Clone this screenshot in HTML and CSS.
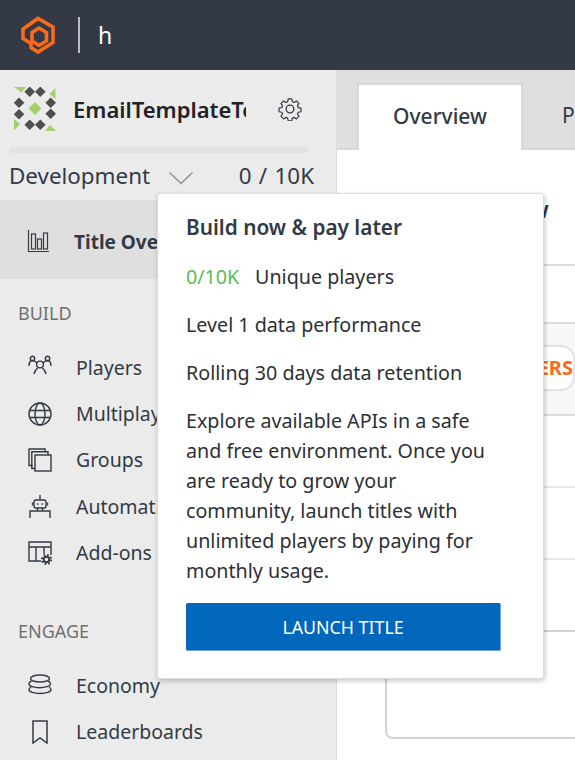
FILE: index.html
```html
<!DOCTYPE html>
<html lang="en">
<head>
<meta charset="utf-8">
<title>Overview</title>
<link rel="stylesheet" href="styles.css">
</head>
<body>
<header class="topbar">
  <svg class="logo" viewBox="20 14 36 40" width="36" height="40" fill="none" stroke="#f96b1b" stroke-width="3.600"><path d="M23 28 L38 17.500 L53 26 V41.500 L38 51 L31 46.500 V40"/><path d="M23 27 V37.500 L31 42.500"/><path d="M39 27 L46.500 31.500 V40 L39 44.500 L32 40 V31.500 Z"/></svg>
  <span class="divider"></span>
  <span class="crumb">h</span>
</header>
<div class="shell">
  <aside class="sidebar">
    <div class="title-row">
      <svg class="title-logo" viewBox="14 87 42 44" width="42" height="44">
        <path d="M14 87H26L21.500 92.500Z M55.500 88V99L49.500 94Z M56 131H45L50 125Z M14 119V130.500L20 124Z" fill="#a4d06a"/>
        <path d="M29.700 86.500l5.300 5.300-5.300 5.300-5.300-5.300Z M40.300 86.500l5.300 5.300-5.300 5.300-5.300-5.300Z M19 97.400l5.300 5.300-5.300 5.300-5.300-5.300Z M19 109l5.300 5.300-5.300 5.300-5.300-5.300Z M50.700 97.400l5.300 5.300-5.300 5.300-5.300-5.300Z M50.700 108.400l5.300 5.300-5.300 5.300-5.300-5.300Z M29.700 119.400l5.300 5.300-5.300 5.300-5.300-5.300Z M40.300 119.400l5.300 5.300-5.300 5.300-5.300-5.300Z" fill="#4f4f4f"/>
        <path d="M35 102l6.500 6.500-6.500 6.500-6.500-6.500Z" fill="#a4d06a"/>
      </svg>
      <div class="title-name">EmailTemplateTest</div>
      <svg class="gear" viewBox="0 0 24 24" width="24" height="24" fill="none" stroke="#333a45" stroke-width="1.300" stroke-linejoin="round"><circle cx="12" cy="12" r="3.800"/><path d="M10 .8h4l.6 3.100 1.900.8 2.700-1.700 2.800 2.800-1.700 2.700.8 1.900 3.100.6v4l-3.100.6-.8 1.900 1.700 2.700-2.800 2.800-2.700-1.700-1.900.8-.6 3.100h-4l-.6-3.100-1.900-.8-2.700 1.700-2.800-2.800 1.700-2.700-.8-1.900-3.100-.6v-4l3.100-.6.800-1.900-1.700-2.700 2.800-2.800 2.700 1.700 1.900-.8Z" transform="translate(1.200 1.200) scale(.9)"/></svg>
    </div>
    <div class="usage-bar"></div>
    <div class="env-row">
      <span class="env-name">Development</span>
      <svg class="chevron" viewBox="0 0 26 14" width="26" height="14"><path d="M1.500 1.500 L13 12.500 L24.500 1.500" fill="none" stroke="#8f9499" stroke-width="1.500"/></svg>
      <span class="env-count">0 / 10K</span>
    </div>
    <a class="overview-item">
      <svg class="nav-icon" viewBox="0 0 24 24" width="24" height="24" fill="none" stroke="#333a45" stroke-width="1.200"><path d="M1.500 0v21.500H22"/><rect x="4.500" y="4" width="4" height="15"/><rect x="10.500" y="9" width="4" height="10"/><rect x="16.500" y="3" width="4" height="16"/></svg>
      <span>Title Overview</span>
    </a>
    <div class="nav-heading">BUILD</div>
    <nav class="nav-group">
      <a class="nav-item"><svg class="nav-icon" viewBox="0 0 24 24" width="24" height="24" fill="none" stroke="#333a45" stroke-width="1.400"><circle cx="12" cy="9.500" r="3.400"/><path d="M6 19c.5-2.500 2-4.500 3.500-6M18 19c-.5-2.500-2-4.500-3.500-6"/><circle cx="4.500" cy="3.500" r="2.200"/><circle cx="19.500" cy="3.500" r="2.200"/><path d="M1 11c0-3 1-5.500 3.500-5.500 1.800 0 3 1 4.500 2.500M23 11c0-3-1-5.500-3.500-5.500-1.800 0-3 1-4.500 2.500"/></svg><span>Players</span></a>
      <a class="nav-item"><svg class="nav-icon" viewBox="0 0 24 24" width="24" height="24" fill="none" stroke="#333a45" stroke-width="1.400"><circle cx="12" cy="12" r="11"/><ellipse cx="12" cy="12" rx="5" ry="11"/><path d="M1.500 8.500h21M1.500 15.500h21"/></svg><span>Multiplayer</span></a>
      <a class="nav-item"><svg class="nav-icon" viewBox="0 0 24 24" width="24" height="24" fill="none" stroke="#333a45" stroke-width="1.400"><path d="M4.500 17.500H1V1H17V3.500"/><path d="M7 20.500H3.800V3.800H20V7"/><rect x="7" y="7" width="16" height="16" fill="#ebebeb"/></svg><span>Groups</span></a>
      <a class="nav-item"><svg class="nav-icon" viewBox="0 0 24 24" width="24" height="24" fill="none" stroke="#333a45" stroke-width="1.400"><path d="M12 1v5"/><rect x="6" y="6" width="12" height="8" rx="2"/><path d="M4.500 8.500v3M19.500 8.500v3M9 10h1.500M13.500 10h1.500M9.500 14v3M14.500 14v3M2 24v-7h20v7"/></svg><span>Automation</span></a>
      <a class="nav-item"><svg class="nav-icon" viewBox="0 0 24 24" width="24" height="24" fill="none" stroke="#333a45" stroke-width="1.400"><path d="M13 20H1V1h22v13M1 6h22M8 6v14M16 6v7"/><circle cx="18.500" cy="18.500" r="2.800" stroke-width="2"/><circle cx="18.500" cy="18.500" r="4.700" stroke-width="1.800" stroke-dasharray="1.800 1.900"/></svg><span>Add-ons</span></a>
    </nav>
    <div class="nav-heading engage">ENGAGE</div>
    <nav class="nav-group">
      <a class="nav-item"><svg class="nav-icon" viewBox="0 0 24 24" width="24" height="24" fill="none" stroke="#333a45" stroke-width="1.400"><ellipse cx="12" cy="5.500" rx="9.500" ry="3.500"/><path d="M3.500 8c-1.500.7-2.500 1.800-2.500 3 0 2.200 4.800 3.700 10.500 3.700S22.500 13 22.500 11c0-1.200-1-2.300-2.500-3"/><path d="M3 14c-1.300.8-2 1.700-2 2.700 0 2.200 5 3.800 11 3.800s11-1.600 11-3.800c0-1-.7-1.900-2-2.700"/></svg><span>Economy</span></a>
      <a class="nav-item"><svg class="nav-icon" viewBox="0 0 24 24" width="24" height="24" fill="none" stroke="#333a45" stroke-width="1.500"><path d="M5 1h14v22l-7-5-7 5Z"/></svg><span>Leaderboards</span></a>
    </nav>
  </aside>
  <main class="main">
    <div class="tabs">
      <div class="tab active">Overview</div>
      <div class="tab">Players</div>
    </div>
    <div class="content">
      <h2 class="content-title">Title Overview</h2>
      <div class="card">
        <div class="card-band">
          <div class="pill">VIEW PLAYERS</div>
        </div>
        <div class="card-row"></div>
        <div class="card-row"></div>
      </div>
      <div class="lower-card"></div>
    </div>
  </main>
</div>
<div class="popover">
  <div class="pop-title">Build now &amp; pay later</div>
  <div class="pop-line"><span class="pop-count">0/10K</span><span>Unique players</span></div>
  <div class="pop-line">Level 1 data performance</div>
  <div class="pop-line">Rolling 30 days data retention</div>
  <p class="pop-text">Explore available APIs in a safe and free environment. Once you are ready to grow your community, launch titles with unlimited players by paying for monthly usage.</p>
  <button class="pop-button">LAUNCH TITLE</button>
</div>
</body>
</html>
```
FILE: styles.css
```css
* { box-sizing: border-box; }
html, body { margin: 0; height: 100%; overflow: hidden; }
body { width: 575px; height: 760px; font-family: "Noto Sans", "Open Sans", sans-serif; color: #333a45; background: #fff; position: relative; }

.topbar { height: 70px; background: #333a45; display: flex; align-items: center; padding-left: 20px; }
.logo { flex: none; }
.divider { width: 2px; height: 36px; background: #b9bcc0; margin-left: 22px; }
.crumb { color: #fff; font-size: 23px; margin-left: 18px; }

.shell { display: flex; height: 690px; }
.sidebar { width: 337px; flex: none; background: #ebebeb; border-right: 1px solid #dcdcdc; overflow: hidden; }
.title-row { display: flex; align-items: center; padding-left: 14px; height: 77px; }
.title-logo { flex: none; }
.title-name { font-size: 22px; font-weight: 600; color: #1f2329; width: 173px; margin-left: 17px; white-space: nowrap; overflow: hidden; }
.gear { margin-left: 32px; flex: none; }
.usage-bar { height: 6px; width: 300px; margin: 0 0 0 9px; background: #e2e2e2; border-radius: 3px; }
.env-row { display: flex; align-items: center; height: 46px; padding: 0 22px 2px 9px; font-size: 22.400px; }
.chevron { margin-left: 18px; margin-top: 6px; flex: none; }
.env-count { margin-left: auto; white-space: nowrap; word-spacing: 1.500px; }

.overview-item { height: 79px; background: #dfdfdf; display: flex; align-items: center; padding: 4px 0 0 27px; font-size: 19px; font-weight: 700; white-space: nowrap; margin-top: 1px; }
.overview-item span { margin-left: 23px; }
.nav-heading { color: #707070; font-size: 18px; padding-left: 18px; margin-top: 23px; height: 22px; line-height: 22px; }
.engage { margin-top: 44px; }
.nav-group { margin-top: 20px; display: flex; flex-direction: column; }
.nav-item { height: 46.400px; display: flex; align-items: center; padding-left: 28px; font-size: 19.500px; white-space: nowrap; }
.nav-icon { flex: none; width: 24px; height: 24px; }
.nav-item span { margin-left: 24px; }

.main { flex: 1; min-width: 0; }
.tabs { height: 80px; background: #dfdfdf; box-shadow: inset 0 -2px #d9d9d9; display: flex; padding: 13px 0 0 20px; overflow: hidden; }
.tab { font-size: 21px; flex: none; line-height: 64px; white-space: nowrap; }
.tab.active { width: 166px; text-align: center; background: #fff; border: 2px solid #d9d9d9; border-bottom: 0; font-weight: 500; line-height: 62px; margin-right: 39px; height: 67px; }
.content { padding: 45px 0 0 48px; position: relative; }
.content-title { font-size: 23.500px; font-weight: 600; margin: 0; height: 69px; color: #1f3b5b; line-height: 28px; white-space: nowrap; overflow: hidden; }
.card { border-top: 2px solid #dcdcdc; height: 366px; }
.card-band { margin-top: 56px; height: 94px; background: #f7f8fa; border-top: 2px solid #dcdcdc; border-bottom: 2px solid #dcdcdc; padding-top: 21px; }
.pill { border: 2px solid #e3e3e3; background: #fff; height: 46px; line-height: 42px; border-radius: 14px; color: #f96b1b; font-weight: 700; font-size: 20px; white-space: nowrap; text-align: right; overflow: hidden; }
.card-row { height: 72px; border-bottom: 2px solid #e8e8e8; }
.lower-card { position: absolute; left: 48px; top: 480px; width: 190px; height: 109px; border: 2px solid #d2d2d2; border-right: 0; border-radius: 8px 0 0 8px; }

.popover { position: absolute; left: 157px; top: 193px; width: 387px; height: 486px; background: #fff; border: 1px solid #dcdcdc; border-radius: 3px; box-shadow: 1px 2px 5px rgba(0,0,0,.22); padding: 19px 28px 20px; }
.pop-title { font-size: 20.800px; font-weight: 600; height: 40px; line-height: 28px; white-space: nowrap; }
.pop-line { font-size: 19.700px; height: 48px; line-height: 48px; white-space: nowrap; display: flex; color: #2c3038; }
.pop-count { color: #57bd57; width: 69px; }
.pop-text { margin: 9px 0 0; width: 315px; font-size: 19.700px; line-height: 30px; color: #2c3038; }
.pop-button { display: block; margin-top: 17px; width: 315px; height: 48px; background: #0067bb; color: #fff; border: 0; border-right: 1px solid #6aa6db; border-bottom: 1px solid #6aa6db; border-radius: 2px; font-family: inherit; font-size: 17.800px; padding: 0; }
```
